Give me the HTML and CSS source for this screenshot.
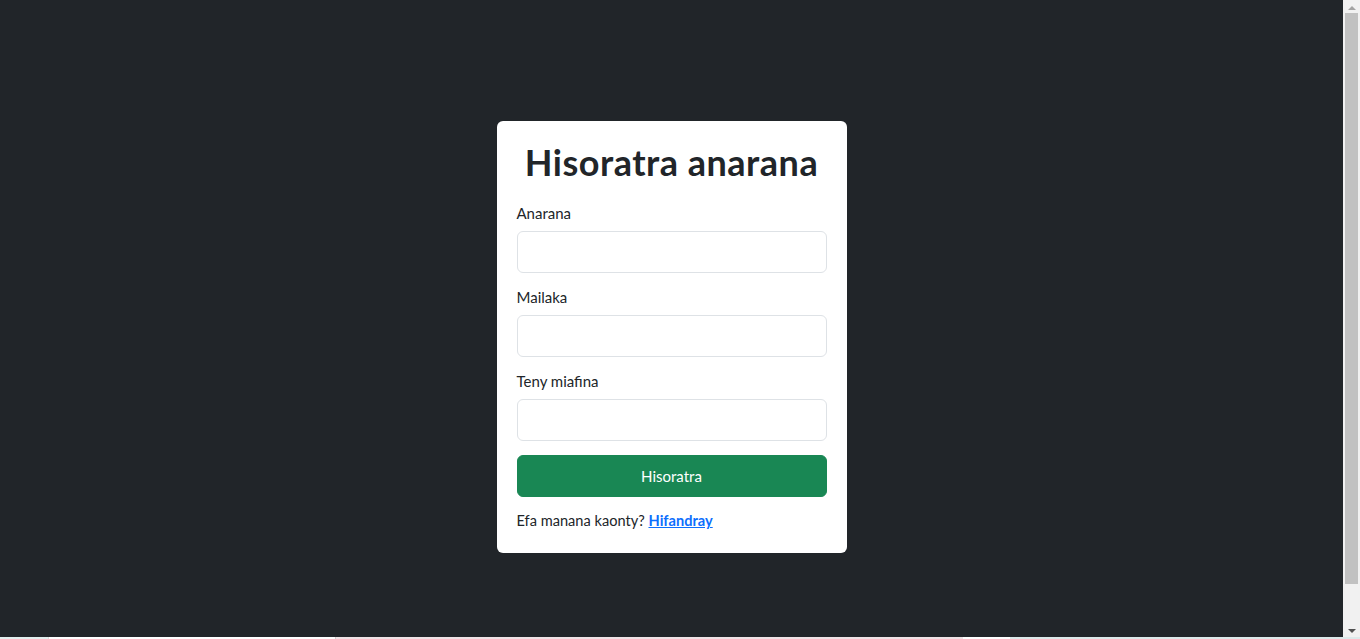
FILE: index.html
```html
<!DOCTYPE html>
<html lang="mg">
<head>
<meta charset="utf-8">
<title>Hisoratra anarana</title>
<link rel="stylesheet" href="styles.css">
</head>
<body>
<main class="page">
  <form class="card">
    <h1 class="title">Hisoratra anarana</h1>
    <div class="group">
      <label class="label" for="name">Anarana</label>
      <input class="input" id="name" type="text">
    </div>
    <div class="group">
      <label class="label" for="mail">Mailaka</label>
      <input class="input" id="mail" type="email">
    </div>
    <div class="group">
      <label class="label" for="pass">Teny miafina</label>
      <input class="input" id="pass" type="password">
    </div>
    <button class="btn" type="button">Hisoratra</button>
    <p class="foot">Efa manana kaonty? <a class="link" href="#">Hifandray</a></p>
  </form>
</main>
<div class="scrollbar" aria-hidden="true">
  <div class="sb-btn"><span class="arrow-up"></span></div>
  <div class="sb-track"><div class="sb-thumb"></div></div>
  <div class="sb-btn"><span class="arrow-down"></span></div>
</div>
<div class="taskstrip"></div>
</body>
</html>
```

FILE: styles.css
```css
* { box-sizing: border-box; }
html, body { margin: 0; padding: 0; }
html { background: #212529; }
body {
  background: #212529;
  font-family: Lato, "Open Sans", sans-serif;
  color: #212529;
  padding-right: 17px;
  padding-bottom: 10px;
}
.page {
  min-height: 674px;
  display: flex;
  align-items: center;
  justify-content: center;
}
.card {
  width: 350px;
  background: #fff;
  border-radius: 6px;
  padding: 20px 20px 21px;
}
.title {
  margin: 0 0 19px;
  font-size: 36px;
  line-height: 42px;
  letter-spacing: 0.5px;
  font-weight: 700;
  text-align: center;
  color: #212529;
}
.group { margin-bottom: 13px; }
.group:last-of-type { margin-bottom: 14px; }
.label {
  display: block;
  font-size: 15px;
  line-height: 22px;
  margin-bottom: 7px;
}
.input {
  display: block;
  width: 100%;
  height: 42px;
  border: 1px solid #dee2e6;
  border-radius: 6px;
  background: #fff;
  font: inherit;
  padding: 6px 12px;
}
.btn {
  display: block;
  width: 100%;
  height: 42px;
  border: 1px solid #198754;
  border-radius: 6px;
  background: #198754;
  color: #fff;
  font: inherit;
  font-size: 15px;
  cursor: pointer;
}
.foot {
  margin: 13px 0 0;
  font-size: 14.6px;
  line-height: 22px;
}
.link {
  color: #0d6efd;
  font-weight: 700;
  text-decoration: underline;
}

/* classic window scrollbar */
.scrollbar {
  position: fixed;
  top: 0;
  right: 0;
  width: 17px;
  height: 637px;
  background: #f1f1f1;
  display: flex;
  flex-direction: column;
}
.sb-btn {
  height: 13px;
  flex: none;
  display: flex;
  align-items: center;
  justify-content: center;
}
.arrow-up {
  width: 0;
  height: 0;
  border-left: 4px solid transparent;
  border-right: 4px solid transparent;
  border-bottom: 4px solid #a3a3a3;
  margin-top: 2px;
}
.arrow-down {
  width: 0;
  height: 0;
  border-left: 4px solid transparent;
  border-right: 4px solid transparent;
  border-top: 4px solid #505050;
  margin-top: 1px;
}
.sb-track {
  flex: 1;
  padding: 0 2px;
}
.sb-thumb {
  height: 571px;
  background: #c1c1c1;
}
.taskstrip {
  position: fixed;
  left: 0;
  right: 0;
  bottom: 0;
  height: 2px;
  background: linear-gradient(to right,
    #e3efee 0, #e3efee 48px, #b8b8b8 48px, #ffffff 49px, #ffffff 335px,
    #b8b8b8 335px, #efe3e6 336px, #efe3e6 963px, #ffffff 963px, #ffffff 1010px,
    #dde9ea 1010px, #dde9ea 100%);
}
```
